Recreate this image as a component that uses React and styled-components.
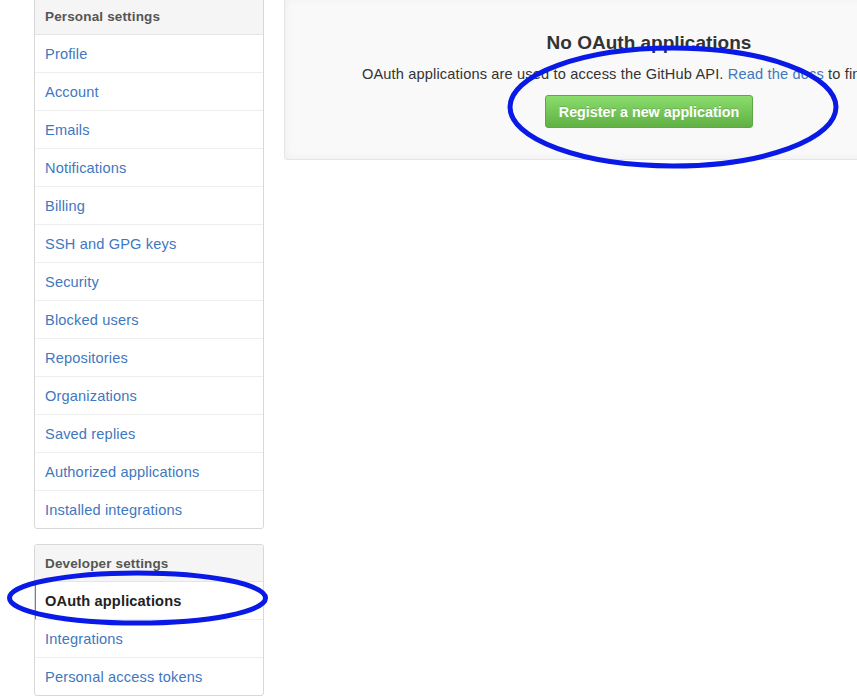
import styled, { createGlobalStyle } from "styled-components";

const GlobalStyle = createGlobalStyle`
  html, body {
    margin: 0;
    padding: 0;
    background: #fff;
    overflow: hidden;
    font-family: "Liberation Sans", Arial, sans-serif;
    font-size: 14.6px;
    letter-spacing: 0.15px;
    color: #333;
  }
`;

const personal = [
  "Profile",
  "Account",
  "Emails",
  "Notifications",
  "Billing",
  "SSH and GPG keys",
  "Security",
  "Blocked users",
  "Repositories",
  "Organizations",
  "Saved replies",
  "Authorized applications",
  "Installed integrations",
];

const developer = [
  { label: "OAuth applications", active: true },
  { label: "Integrations" },
  { label: "Personal access tokens" },
];

function App() {
  return (
    <Page>
      <GlobalStyle />
      <Layout>
        <Sidebar>
          <Menu>
            <MenuHeading>Personal settings</MenuHeading>
            {personal.map((item) => (
              <MenuItem key={item}>{item}</MenuItem>
            ))}
          </Menu>
          <Menu>
            <MenuHeading>Developer settings</MenuHeading>
            {developer.map((item) => (
              <MenuItem key={item.label} active={item.active}>
                {item.label}
              </MenuItem>
            ))}
          </Menu>
        </Sidebar>
        <Main>
          <Blankslate>
            <Title>No OAuth applications</Title>
            <Lead>
              OAuth applications are used to access the GitHub API.{" "}
              <Link>Read the docs</Link> to find out more.
            </Lead>
            <GreenButton>Register a new application</GreenButton>
          </Blankslate>
        </Main>
      </Layout>
      <Annotations width="857" height="699" viewBox="0 0 857 699">
        <ellipse cx="673" cy="107" rx="163" ry="59" />
        <ellipse cx="137.5" cy="598" rx="128" ry="25" />
      </Annotations>
    </Page>
  );
}

const Page = styled.div`
  position: relative;
  width: 857px;
  height: 699px;
  overflow: hidden;
`;

const Layout = styled.div`
  display: flex;
  align-items: flex-start;
  gap: 20px;
  margin-top: -3px;
  padding-left: 34px;
`;

const Sidebar = styled.nav`
  display: flex;
  flex-direction: column;
  gap: 15px;
  width: 230px;
  flex-shrink: 0;
`;

const Menu = styled.div`
  border: 1px solid #d8d8d8;
  border-radius: 3px;
  background: #fff;
  overflow: hidden;
`;

const MenuHeading = styled.div`
  height: 37px;
  box-sizing: border-box;
  padding: 0 10px;
  display: flex;
  align-items: center;
  background: #f5f5f5;
  border-bottom: 1px solid #e5e5e5;
  color: #555;
  font-size: 13.5px;
  font-weight: bold;
`;

const MenuItem = styled.a`
  display: flex;
  align-items: center;
  height: 38px;
  box-sizing: border-box;
  padding: 0 10px 0 9px;
  margin-left: -1px;
  border-bottom: 1px solid #eee;
  border-left: 2px solid ${(p) => (p.active ? "#d26911" : "transparent")};
  color: ${(p) => (p.active ? "#222" : "#4078c0")};
  font-weight: ${(p) => (p.active ? "bold" : "normal")};
  cursor: pointer;
  &:last-child {
    border-bottom: none;
    height: 37px;
  }
`;

const Main = styled.div`
  flex-shrink: 0;
`;

const Blankslate = styled.div`
  width: 730px;
  box-sizing: border-box;
  padding: 30px 0 31px;
  background: #f9f9f9;
  border: 1px solid #e5e5e5;
  border-radius: 3px;
  box-shadow: inset 0 0 10px rgba(0, 0, 0, 0.05);
  display: flex;
  flex-direction: column;
  align-items: center;
`;

const Title = styled.h3`
  margin: 0;
  font-size: 19px;
  line-height: 30px;
  letter-spacing: 0;
  font-weight: bold;
  color: #333;
`;

const Lead = styled.p`
  margin: 6px 0 11px;
  line-height: 20px;
  white-space: nowrap;
  color: #333;
`;

const Link = styled.a`
  color: #4078c0;
  cursor: pointer;
`;

const GreenButton = styled.button`
  height: 33px;
  padding: 0 13px;
  font-family: "Liberation Sans", Arial, sans-serif;
  font-size: 14.3px;
  font-weight: bold;
  color: #fff;
  text-shadow: 0 -1px 0 rgba(0, 0, 0, 0.15);
  background: linear-gradient(#8add6d, #60b044);
  border: 1px solid #5ca941;
  border-radius: 3px;
  cursor: pointer;
`;

const Annotations = styled.svg`
  position: absolute;
  left: 0;
  top: 0;
  pointer-events: none;
  ellipse {
    fill: none;
    stroke: #0a1ae6;
    stroke-width: 5;
  }
`;

export default App;
